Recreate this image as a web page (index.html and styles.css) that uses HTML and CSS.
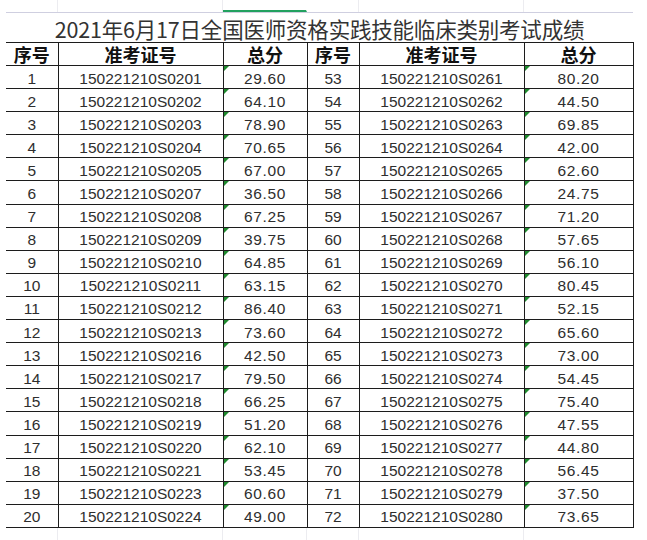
FILE: index.html
```html
<!DOCTYPE html>
<html lang="zh-CN">
<head>
<meta charset="utf-8">
<title>成绩</title>
<link rel="stylesheet" href="styles.css">
</head>
<body>
<div class="sheet">
  <div class="strip top">
    <div class="sc c1"></div><div class="sc c2"></div><div class="sc c3 sel"></div><div class="sc c4"></div><div class="sc c5"></div><div class="sc c6 last"></div>
  </div>
  <table class="grid">
    <colgroup>
      <col class="w1"><col class="w2"><col class="w3"><col class="w4"><col class="w5"><col class="w6">
    </colgroup>
    <tbody>
      <tr class="title-row"><td colspan="6" class="title">2021年6月17日全国医师资格实践技能临床类别考试成绩</td></tr>
      <tr class="head"><th>序号</th><th>准考证号</th><th>总分</th><th>序号</th><th>准考证号</th><th>总分</th></tr>
      <tr><td>1</td><td>150221210S0201</td><td class="score">29.60</td><td>53</td><td>150221210S0261</td><td class="score">80.20</td></tr>
      <tr><td>2</td><td>150221210S0202</td><td class="score">64.10</td><td>54</td><td>150221210S0262</td><td class="score">44.50</td></tr>
      <tr><td>3</td><td>150221210S0203</td><td class="score">78.90</td><td>55</td><td>150221210S0263</td><td class="score">69.85</td></tr>
      <tr><td>4</td><td>150221210S0204</td><td class="score">70.65</td><td>56</td><td>150221210S0264</td><td class="score">42.00</td></tr>
      <tr><td>5</td><td>150221210S0205</td><td class="score">67.00</td><td>57</td><td>150221210S0265</td><td class="score">62.60</td></tr>
      <tr><td>6</td><td>150221210S0207</td><td class="score">36.50</td><td>58</td><td>150221210S0266</td><td class="score">24.75</td></tr>
      <tr><td>7</td><td>150221210S0208</td><td class="score">67.25</td><td>59</td><td>150221210S0267</td><td class="score">71.20</td></tr>
      <tr><td>8</td><td>150221210S0209</td><td class="score">39.75</td><td>60</td><td>150221210S0268</td><td class="score">57.65</td></tr>
      <tr><td>9</td><td>150221210S0210</td><td class="score">64.85</td><td>61</td><td>150221210S0269</td><td class="score">56.10</td></tr>
      <tr><td>10</td><td>150221210S0211</td><td class="score">63.15</td><td>62</td><td>150221210S0270</td><td class="score">80.45</td></tr>
      <tr><td>11</td><td>150221210S0212</td><td class="score">86.40</td><td>63</td><td>150221210S0271</td><td class="score">52.15</td></tr>
      <tr><td>12</td><td>150221210S0213</td><td class="score">73.60</td><td>64</td><td>150221210S0272</td><td class="score">65.60</td></tr>
      <tr><td>13</td><td>150221210S0216</td><td class="score">42.50</td><td>65</td><td>150221210S0273</td><td class="score">73.00</td></tr>
      <tr><td>14</td><td>150221210S0217</td><td class="score">79.50</td><td>66</td><td>150221210S0274</td><td class="score">54.45</td></tr>
      <tr><td>15</td><td>150221210S0218</td><td class="score">66.25</td><td>67</td><td>150221210S0275</td><td class="score">75.40</td></tr>
      <tr><td>16</td><td>150221210S0219</td><td class="score">51.20</td><td>68</td><td>150221210S0276</td><td class="score">47.55</td></tr>
      <tr><td>17</td><td>150221210S0220</td><td class="score">62.10</td><td>69</td><td>150221210S0277</td><td class="score">44.80</td></tr>
      <tr><td>18</td><td>150221210S0221</td><td class="score">53.45</td><td>70</td><td>150221210S0278</td><td class="score">56.45</td></tr>
      <tr><td>19</td><td>150221210S0223</td><td class="score">60.60</td><td>71</td><td>150221210S0279</td><td class="score">37.50</td></tr>
      <tr><td>20</td><td>150221210S0224</td><td class="score">49.00</td><td>72</td><td>150221210S0280</td><td class="score">73.65</td></tr>
    </tbody>
  </table>
  <div class="strip bottom">
    <div class="sc c1"></div><div class="sc c2"></div><div class="sc c3"></div><div class="sc c4"></div><div class="sc c5"></div><div class="sc c6 last"></div>
  </div>
</div>
</body>
</html>
```

FILE: styles.css
```css
html, body {
  margin: 0;
  padding: 0;
  background: #ffffff;
}

.sheet {
  padding-left: 6px;
  width: 627px;
  font-family: "Liberation Sans", "Noto Sans CJK SC", sans-serif;
  color: #1a1a1a;
}

.strip {
  display: flex;
}

.strip.top {
  height: 12px;
}

.strip.bottom {
  height: 12px;
}

.sc {
  box-sizing: border-box;
  border-right: 1px solid #ececf0;
}

.sc.last {
  border-right: none;
}

.c1 { width: 52px; }
.c2 { width: 165px; }
.c3 { width: 84px; }
.c4 { width: 52px; }
.c5 { width: 165px; }
.c6 { width: 109px; }

.strip.top .sc.sel {
  border-bottom: 2px solid #22a15f;
  border-right-color: #ffffff;
}

.grid {
  border-collapse: collapse;
  table-layout: fixed;
  width: 627px;
}

.w1 { width: 52px; }
.w2 { width: 165px; }
.w3 { width: 84px; }
.w4 { width: 52px; }
.w5 { width: 165px; }
.w6 { width: 109px; }

.grid tr {
  height: 23.1px;
}

.grid tr.title-row {
  height: 30px;
}

.grid tr.head {
  height: 23px;
}

.grid td {
  border: 1px solid #1c1c1c;
  text-align: center;
  font-size: 15.5px;
  line-height: 18px;
  padding: 3px 0 0 0;
  vertical-align: middle;
  color: #2e2e2e;
  white-space: nowrap;
}

.grid td.title {
  border-top: 1px solid #cfcfe0;
  border-left: none;
  border-right: none;
  border-bottom: 1px solid #1c1c1c;
  text-align: center;
  font-family: "Noto Sans CJK SC", sans-serif;
  font-size: 21.5px;
  line-height: 26px;
  padding: 2px 0 0 0;
  color: #333333;
  letter-spacing: -0.2px;
}

.grid .head th {
  border: 1px solid #1c1c1c;
  font-family: "Noto Sans CJK SC", sans-serif;
  font-weight: bold;
  font-size: 18px;
  line-height: 20px;
  padding: 0;
  text-align: center;
  color: #111111;
}

.grid tr:not(.title-row) td:first-child,
.grid .head th:first-child {
  border-left: none;
}

.grid td.score {
  position: relative;
  letter-spacing: 0.6px;
}

.grid td.score::before {
  content: "";
  position: absolute;
  top: 0;
  left: 0;
  width: 0;
  height: 0;
  border-top: 5px solid #1f8a2e;
  border-right: 5px solid transparent;
}
```
